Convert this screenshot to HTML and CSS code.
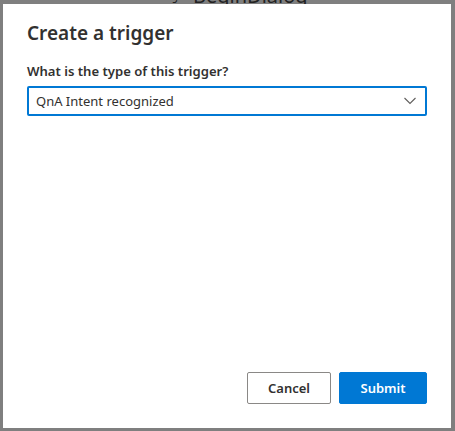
FILE: index.html
```html
<!DOCTYPE html>
<html>
<head>
<meta charset="utf-8">
<link rel="stylesheet" href="styles.css">
</head>
<body>
<div class="backdrop-text"><span class="bd-icon">⤴</span>BeginDialog</div>
<div class="overlay">
  <div class="dialog">
    <h1 class="title">Create a trigger</h1>
    <label class="label">What is the type of this trigger?</label>
    <div class="dropdown">
      <span class="dd-text">QnA Intent recognized</span>
      <svg class="chev" width="12" height="8" viewBox="0 0 12 8"><path d="M0.5 1 L6 6.5 L11.5 1" fill="none" stroke="#605e5c" stroke-width="1.1"/></svg>
    </div>
    <div class="spacer"></div>
    <div class="footer">
      <button class="btn btn-default">Cancel</button>
      <button class="btn btn-primary">Submit</button>
    </div>
  </div>
</div>
</body>
</html>
```
FILE: styles.css
```css
html, body {
  margin: 0;
  padding: 0;
  width: 455px;
  height: 431px;
  overflow: hidden;
  background: #7f7f7f;
  font-family: "Noto Sans", "Open Sans", sans-serif;
}
.backdrop-text {
  position: absolute;
  left: 172px;
  top: -18px;
  font-size: 20px;
  color: #222;
  white-space: nowrap;
}
.bd-icon {
  display: inline-block;
  width: 21px;
  font-size: 16px;
}
.overlay {
  position: relative;
  padding: 4px 4px 3px 3px;
  height: 424px;
}
.dialog {
  width: 448px;
  height: 424px;
  background: #fff;
  box-sizing: border-box;
  padding: 16px 24px 24px 24px;
  display: flex;
  flex-direction: column;
}
.title {
  margin: 0;
  font-size: 19px;
  font-weight: 600;
  color: #323130;
  line-height: 26px;
}
.label {
  margin-top: 15px;
  font-size: 13.1px;
  font-weight: 600;
  color: #323130;
  line-height: 20px;
}
.dropdown {
  margin-top: 5px;
  width: 400px;
  height: 30px;
  box-sizing: border-box;
  border: 2px solid #0078d4;
  border-radius: 2px;
  display: flex;
  align-items: center;
  padding: 0 8px 0 7px;
}
.dd-text {
  flex: 1;
  font-size: 13px;
  color: #323130;
}
.chev {
  margin-right: 1px;
}
.spacer { flex: 1; }
.footer {
  display: flex;
  justify-content: flex-end;
  gap: 8px;
}
.btn {
  height: 32px;
  border-radius: 2px;
  font-family: inherit;
  font-size: 13px;
  font-weight: 600;
  padding: 0 16px;
  box-sizing: border-box;
}
.btn-default {
  width: 84px;
  background: #fff;
  border: 1px solid #8a8886;
  color: #323130;
}
.btn-primary {
  width: 88px;
  background: #0078d4;
  border: 1px solid #0078d4;
  color: #fff;
}
```
